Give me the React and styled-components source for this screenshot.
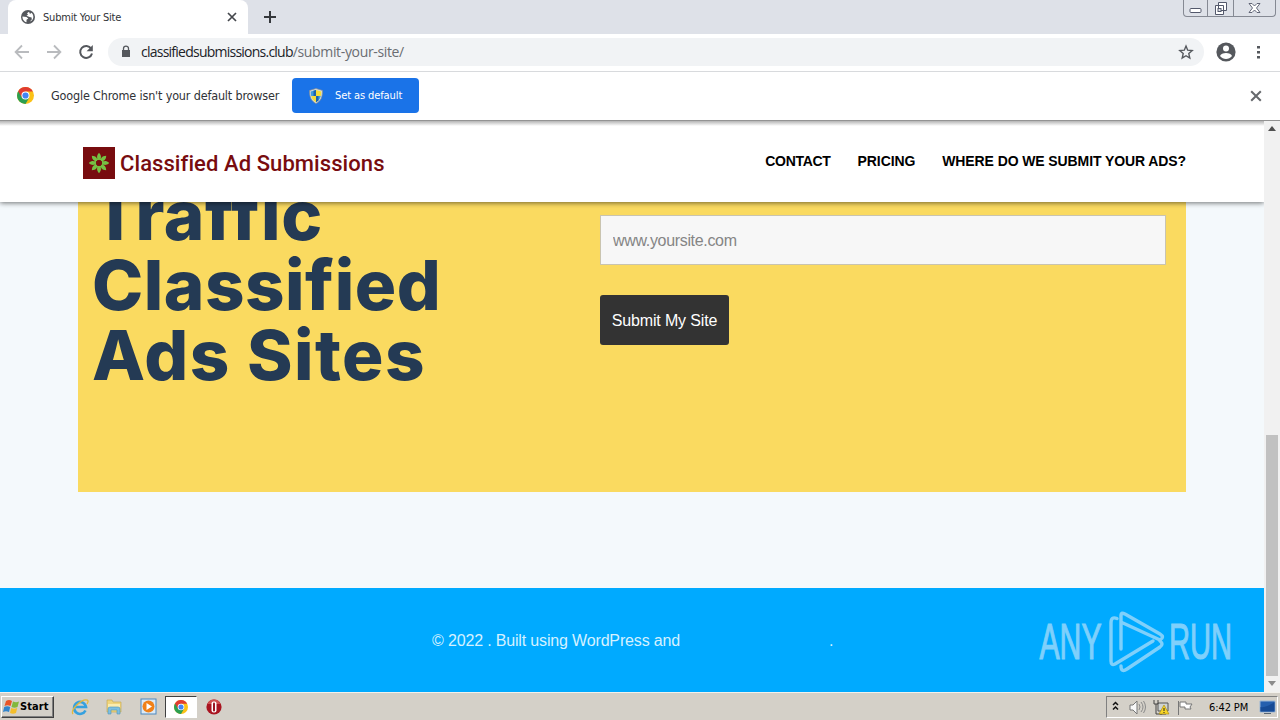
import styled, { createGlobalStyle } from "styled-components";

const GlobalStyle = createGlobalStyle`
  * {
    box-sizing: border-box;
  }
  body {
    margin: 0;
    overflow: hidden;
    font-family: "Liberation Sans", Arial, sans-serif;
  }
  svg {
    display: block;
    flex: none;
  }
`;

const Screen = styled.div`
  width: 1280px;
  height: 720px;
  display: flex;
  flex-direction: column;
  overflow: hidden;
`;

const Label = styled.span`
  font-family: ${(props) => props.$font || '"DejaVu Sans Condensed", "DejaVu Sans"'}, sans-serif;
  font-stretch: ${(props) => (props.$font ? "normal" : "condensed")};
  font-size: ${(props) => props.$size || 11}px;
  font-weight: ${(props) => props.$weight || 400};
  letter-spacing: ${(props) => props.$spacing || 0}px;
  color: ${(props) => props.$color || "#303236"};
  white-space: pre;
`;

/* browser */

const TabStrip = styled.div`
  height: 34px;
  flex: none;
  display: flex;
  justify-content: space-between;
  background: #dee1e8;
  padding-left: 8px;
`;

const TabGroup = styled.div`
  display: flex;
  align-items: center;
  gap: 14px;
`;

const Tab = styled.div`
  width: 240px;
  height: 34px;
  display: flex;
  align-items: center;
  padding: 0 10px 0 13px;
  gap: 8px;
  background: #ffffff;
  border-radius: 8px 8px 0 0;

  span {
    flex: 1;
  }
`;

const WindowButtons = styled.div`
  display: flex;
  width: 93px;
  height: 17px;
  margin-right: 4px;
  border: 1px solid #858993;
  border-top: 0;
  border-radius: 0 0 4px 4px;
`;

const WindowButton = styled.div`
  width: ${(props) => props.$width}px;
  display: flex;
  align-items: center;
  justify-content: center;
  border-right: ${(props) => (props.$last ? "0" : "1px solid #858993")};
`;

const Toolbar = styled.div`
  height: 38px;
  flex: none;
  display: flex;
  align-items: center;
  padding: 0 17px 1px 14px;
  background: #ffffff;
  border-bottom: 1px solid #d8dadd;
`;

const NavIcons = styled.div`
  display: flex;
  gap: 16px;
  margin-right: 14px;
`;

const AddressBar = styled.div`
  flex: 1;
  height: 28px;
  display: flex;
  align-items: center;
  padding: 0 10px 0 10px;
  border-radius: 14px;
  background: #f1f3f5;
`;

const Address = styled.div`
  flex: 1;
  display: flex;
  margin-left: 7px;
  padding-bottom: 2px;
`;

const ToolbarEnd = styled.div`
  display: flex;
  align-items: center;
  gap: 17px;
  margin-left: 12px;
`;

const InfoBar = styled.div`
  height: 49px;
  flex: none;
  display: flex;
  align-items: center;
  padding: 0 18px 1px 17px;
  background: #ffffff;
  border-bottom: 1px solid #939393;
`;

const InfoText = styled.div`
  width: 241px;
  margin-left: 17px;
  padding-bottom: 2px;
`;

const DefaultButton = styled.button`
  width: 127px;
  height: 35px;
  display: flex;
  align-items: center;
  gap: 12px;
  margin-right: auto;
  padding: 0 0 0 17px;
  border: 0;
  border-radius: 4px;
  background: #1a73e8;
`;

/* page */

const Viewport = styled.div`
  height: 571px;
  flex: none;
  display: flex;
`;

const Page = styled.div`
  width: 1264px;
  display: flex;
  flex-direction: column;
  overflow: hidden;
  background: #f4f9fc;
`;

const Header = styled.header`
  height: 81px;
  flex: none;
  display: flex;
  align-items: center;
  justify-content: space-between;
  padding: 0 78px 0 83px;
  background: linear-gradient(#b4b4b4, #ffffff 5px);
  box-shadow: 0 1px 5px rgba(0, 0, 0, 0.55);
  z-index: 1;
`;

const Brand = styled.div`
  display: flex;
  align-items: center;
  gap: 5px;
  padding-top: 3px;
`;

const Menu = styled.nav`
  display: flex;
  gap: 27px;
  padding-bottom: 2px;
  font-size: 14px;
  font-weight: 700;
  color: #000000;
  white-space: nowrap;
`;

const MenuItem = styled.span`
  letter-spacing: ${(props) => props.$spacing}px;
`;

const Hero = styled.section`
  width: 1108px;
  height: 290px;
  flex: none;
  display: flex;
  margin-left: 78px;
  overflow: hidden;
  background: #fada60;
`;

const Title = styled.h1`
  width: 522px;
  margin: -22px 0 0;
  padding-left: 14px;
  font-family: Inter, sans-serif;
  font-size: 69px;
  line-height: 70px;
  font-weight: 800;
  color: #243a54;
`;

const TitleLine = styled.div`
  letter-spacing: ${(props) => props.$spacing}px;
  white-space: nowrap;
`;

const Form = styled.form`
  display: flex;
  flex-direction: column;
  align-items: flex-start;
  gap: 30px;
  padding-top: 13px;
`;

const SiteInput = styled.input`
  width: 566px;
  height: 50px;
  padding: 2px 12px 0;
  border: 1px solid #c9c4b0;
  background: #f7f7f7;
  font-family: "Liberation Sans", Arial, sans-serif;
  font-size: 16px;
  letter-spacing: -0.33px;
  border-radius: 0;

  &::placeholder {
    color: #858585;
  }
`;

const SubmitButton = styled.button`
  width: 129px;
  height: 50px;
  padding: 2px 0 0;
  border: 0;
  border-radius: 3px;
  background: #333333;
  color: #ffffff;
  font-family: "Liberation Sans", Arial, sans-serif;
  font-size: 16px;
  letter-spacing: -0.16px;
`;

const Footer = styled.footer`
  height: 104px;
  display: flex;
  justify-content: space-between;
  margin-top: auto;
  padding: 22px 31px 0 432px;
  background: #00aaff;
`;

const Copyright = styled.p`
  margin: 22px 0 0;
  display: flex;
  gap: 149px;
  font-size: 16px;
  line-height: 18px;
  letter-spacing: -0.16px;
  color: #d5f1ff;
`;

const ScrollBar = styled.div`
  width: 16px;
  display: flex;
  flex-direction: column;
  align-items: center;
  justify-content: space-between;
  padding: 5px 0 6px;
  background: #f1f1f1;
`;

const Thumb = styled.div`
  width: 12px;
  height: 241px;
  margin: auto 0 5px;
  background: #c1c1c1;
`;

/* taskbar */

const TaskBar = styled.div`
  height: 28px;
  display: flex;
  align-items: center;
  padding: 2px 2px 2px 1px;
  background: #d4d0c8;
  border-top: 1px solid #f3f1ec;
`;

const StartButton = styled.div`
  width: 53px;
  height: 22px;
  display: flex;
  align-items: center;
  padding-left: 1px;
  border: 1px solid;
  border-color: #ffffff #404040 #404040 #ffffff;
  box-shadow: inset -1px -1px #808080;
`;

const QuickLaunch = styled.div`
  display: flex;
  align-items: center;
  margin-left: 9px;
`;

const TaskItem = styled.div`
  width: ${(props) => (props.$active ? 32 : 34)}px;
  height: 22px;
  display: flex;
  align-items: center;
  justify-content: center;
  background: ${(props) => (props.$active ? "#ffffff" : "transparent")};
  border: ${(props) => (props.$active ? "1px solid" : "0")};
  border-color: #404040 #ffffff #ffffff #404040;
`;

const Tray = styled.div`
  width: 172px;
  height: 22px;
  display: flex;
  align-items: center;
  margin-left: auto;
  padding: 0 1px 0 5px;
  border: 1px solid;
  border-color: #808080 #ffffff #ffffff #808080;
`;

const Clock = styled.div`
  width: 51px;
  margin-left: 15px;
  padding-bottom: 2px;
  line-height: 1;
`;

function Cross({ size, color }) {
  return (
    <svg width={size} height={size} viewBox="0 0 10 10">
      <path d="M1 1l8 8M9 1L1 9" stroke={color} strokeWidth="1.7" />
    </svg>
  );
}

function GlobeIcon() {
  return (
    <svg width="14" height="14" viewBox="0 0 14 14">
      <circle cx="7" cy="7" r="7" fill="#55585d" />
      <path d="M1.5 6.5l4 .5 1.8 1.6-1.8 1.2v2.4C3 11.6 1.2 9 1.5 6.5zM8 1.8L6 3.2l1 1.5-1.6 1 3.2 1.4 2 .3.2 2-2 2.2c4-.7 4.8-6.4 1.6-8.8L9 4z" fill="#fff" />
    </svg>
  );
}

function ArrowIcon({ flip }) {
  return (
    <svg width="16" height="16" viewBox="0 0 16 16" transform={flip ? "scale(-1 1)" : undefined}>
      <path d="M15 8H2M8 1.5L1.6 8 8 14.5" fill="none" stroke="#b9bbbe" strokeWidth="1.8" />
    </svg>
  );
}

function ReloadIcon() {
  return (
    <svg width="16" height="16" viewBox="0 0 16 16">
      <path d="M13.2 4.6A6 6 0 1 0 14 9.5" fill="none" stroke="#55585d" strokeWidth="2" />
      <path d="M14.8 1v6.2H8.6z" fill="#55585d" />
    </svg>
  );
}

function LockIcon() {
  return (
    <svg width="16" height="16" viewBox="0 0 16 16">
      <path d="M4 6h8v7H4z" fill="#55585d" />
      <path d="M5.5 6.5V4.6a2.5 2.5 0 0 1 5 0v1.9" fill="none" stroke="#55585d" strokeWidth="1.3" />
    </svg>
  );
}

function StarIcon() {
  return (
    <svg width="16" height="16" viewBox="0 0 16 16">
      <path d="M8 2l1.7 4.2 4.5.4-3.4 3 1 4.4L8 11.7 4.2 14l1-4.4-3.4-3 4.5-.4z" fill="none" stroke="#55585d" strokeWidth="1.4" />
    </svg>
  );
}

function ProfileIcon() {
  return (
    <svg width="20" height="20" viewBox="0 0 20 20">
      <circle cx="10" cy="10" r="9.6" fill="#55585d" />
      <circle cx="10" cy="6.6" r="3" fill="#fff" />
      <path d="M4 14c1-4 11-4 12 0-3 4-9 4-12 0z" fill="#fff" />
    </svg>
  );
}

function ChromeLogo({ size }) {
  return (
    <svg width={size} height={size} viewBox="0 0 16 16">
      <circle cx="8" cy="8" r="8" fill="#fbc116" />
      <path d="M8 8L1.1 4A8 8 0 0 0 8 16l3.5-6z" fill="#2b9f51" />
      <path d="M8 8L4.5 9.8 1.1 4A8 8 0 0 1 15 4.3H8z" fill="#e03c31" />
      <circle cx="8" cy="8" r="3.8" fill="#fff" />
      <circle cx="8" cy="8" r="2.9" fill="#4285f4" />
    </svg>
  );
}

function ShieldIcon() {
  return (
    <svg width="14" height="16" viewBox="0 0 14 16">
      <path d="M7 .5L13.5 2.5C13.5 9 12 13 7 15.5 2 13 .5 9 .5 2.5z" fill="#d5dde0" stroke="#868b8e" strokeWidth=".7" />
      <path d="M7 2v6H2.2C1.8 6 1.7 5 1.7 3.5zM7 8h4.8C11 11 9.8 12.7 7 14.2z" fill="#3f9be0" />
      <path d="M7 2v6H4.5V2.7zM7 8h2.5v4.5L7 14.2z" fill="#1c62ad" />
      <path d="M7 2l5.3 1.5c0 1.5-.1 2.5-.5 4.5H7zM7 8v6.2C4.2 12.7 3 11 2.2 8z" fill="#f4dc3b" />
    </svg>
  );
}

function FlowerLogo() {
  return (
    <svg width="32" height="32" viewBox="0 0 32 32">
      <rect width="32" height="32" fill="#780c0f" />
      <g transform="translate(16 16)" fill="#76c043">
        {[0, 45, 90, 135, 180, 225, 270, 315].map((angle) => (
          <path key={angle} d="M0-2.8C-2.2-4-3-7 0-10.2 3-7 2.2-4 0-2.8z" transform={`rotate(${angle})`} />
        ))}
        <circle r="4" fill="none" stroke="#76c043" strokeWidth="1.6" />
      </g>
    </svg>
  );
}

function Watermark() {
  return (
    <svg width="200" height="64" viewBox="0 0 200 64">
      <g
        fill="#7fd0fb"
        stroke="#7fd0fb"
        strokeWidth="1.2"
        fontFamily="'Liberation Sans Narrow', 'Liberation Sans', sans-serif"
        fontSize="50"
      >
        <text x="6.5" y="49" textLength="62" lengthAdjust="spacingAndGlyphs">ANY</text>
        <text x="136" y="49" textLength="63" lengthAdjust="spacingAndGlyphs">RUN</text>
      </g>
      <g fill="none" stroke="#7fd0fb" strokeWidth="3.4" strokeLinejoin="round" strokeLinecap="round">
        <path d="M84 8.5Q78 6 78 13v38q0 5 4 3l38-23" />
        <path d="M88 39V5q0-3 4-1l35 20q5 3 0 6l-37-17" />
        <path d="M88 56q0 7 6 3l33-22q4-3 0-6" />
      </g>
    </svg>
  );
}

function WindowsFlag() {
  return (
    <svg width="17" height="16" viewBox="0 0 17 16">
      <path d="M3 2q3-2 6 0L7.5 7Q4.5 5.5 1.5 7z" fill="#e95427" />
      <path d="M10 2.5q3 1.6 6 0L14.5 8q-3 1.5-6 0z" fill="#82b83c" />
      <path d="M1.2 8q3-1.5 6 0L6 13Q3 11.5 0 13z" fill="#3184cc" />
      <path d="M8.2 9q3 1.5 6 0L13 14q-3 1.5-6 0z" fill="#f4be2b" />
    </svg>
  );
}

function ExplorerIcon() {
  return (
    <svg width="18" height="18" viewBox="0 0 18 18">
      <path d="M14.5 12.5A6 6 0 1 1 15 9H4" fill="none" stroke="#36a1df" strokeWidth="2.6" />
      <path d="M2 16C-1 12 11 0 16.5 2.2 17.5 3 17 4.5 16 6" fill="none" stroke="#e4b83c" strokeWidth="1.3" />
    </svg>
  );
}

function FolderIcon() {
  return (
    <svg width="18" height="18" viewBox="0 0 18 18">
      <path d="M2 2h5l1 2h8v10H2z" fill="#f0d57d" stroke="#c5a44c" strokeWidth=".6" />
      <path d="M3 6h12v4H3z" fill="#faecb0" />
      <path d="M3 16v-5q0-2 2-2h8q2 0 2 2v5h-3v-4H6v4z" fill="#7dbfe2" stroke="#5393b6" strokeWidth=".6" />
    </svg>
  );
}

function PlayerIcon() {
  return (
    <svg width="17" height="17" viewBox="0 0 17 17">
      <rect x="1" y="1" width="15" height="15" fill="#dceaf6" stroke="#4d87bd" />
      <circle cx="8.5" cy="8.5" r="6" fill="#f08119" />
      <path d="M6.5 5l5.5 3.5L6.5 12z" fill="#fff" />
    </svg>
  );
}

function OperaIcon() {
  return (
    <svg width="16" height="16" viewBox="0 0 16 16">
      <circle cx="8" cy="8" r="7.6" fill="#a91420" />
      <path d="M1.5 5a7 7 0 0 1 13 0z" fill="#d05050" />
      <rect x="5.5" y="2.5" width="5" height="11" rx="2" fill="#fff" />
      <rect x="7" y="3.5" width="2" height="9" rx="1" fill="#9b1420" />
    </svg>
  );
}

function TrayIcons() {
  return (
    <svg width="82" height="18" viewBox="0 0 82 18">
      <path d="M1 7l2.5-2.5L6 7M1 11.5L3.5 9 6 11.5" fill="none" stroke="#111" strokeWidth="1.5" />
      <path d="M18 7h3l4-4v13l-4-4h-3z" fill="#f8f8f8" stroke="#777" />
      <path d="M27 6q2 3 0 6M29 4q4 5 0 10M31.5 3q4 6 0 12" fill="none" stroke="#8b8b8b" />
      <path d="M46 5h10v8H46z" fill="#cfd3d2" stroke="#555" />
      <path d="M42 2v4h4V2M44 6v10h6M48 16h6" fill="none" stroke="#444" />
      <path d="M52 7l5 9H47z" fill="#f7d527" stroke="#a58408" strokeWidth=".6" />
      <path d="M52 10v3M52 14v1" stroke="#222" />
      <path d="M66.5 3v14M68 4h6v2h6l-2 3 1 2h-6V9h-5z" fill="#fff" stroke="#777" />
    </svg>
  );
}

function App() {
  return (
    <>
      <GlobalStyle />
      <Screen>
        <TabStrip>
          <TabGroup>
            <Tab>
              <GlobeIcon />
              <Label $spacing={-0.2}>Submit Your Site</Label>
              <svg width="12" height="12" viewBox="0 0 12 12">
                <path d="M2 2l8 8M10 2l-8 8" stroke="#44474c" strokeWidth="1.7" />
              </svg>
            </Tab>
            <svg width="15" height="14" viewBox="0 0 15 14">
              <path d="M8 1v12M2 7h12" stroke="#35383c" strokeWidth="2" />
            </svg>
          </TabGroup>
          <WindowButtons>
            <WindowButton $width={25}>
              <svg width="13" height="16" viewBox="0 0 13 16">
                <rect x="1" y="8.5" width="11" height="4" rx="1" fill="#fff" stroke="#53586b" />
              </svg>
            </WindowButton>
            <WindowButton $width={26}>
              <svg width="14" height="16" viewBox="0 0 14 16">
                <path d="M4.5 2.5h8v8h-8zM1.5 5.5h8v9h-8z" fill="#fff" stroke="#53586b" />
                <rect x="4" y="8.5" width="3" height="3" fill="#dee1e8" stroke="#53586b" />
              </svg>
            </WindowButton>
            <WindowButton $width={42} $last>
              <svg width="13" height="16" viewBox="0 0 13 16">
                <path d="M1 3.5h3l2.5 2.5L9 3.5h3L8.5 8l3.5 4.5H9L6.5 10 4 12.5H1L4.5 8z" fill="#fff" stroke="#53586b" strokeWidth=".9" />
              </svg>
            </WindowButton>
          </WindowButtons>
        </TabStrip>

        <Toolbar>
          <NavIcons>
            <ArrowIcon />
            <ArrowIcon flip />
            <ReloadIcon />
          </NavIcons>
          <AddressBar>
            <LockIcon />
            <Address>
              <Label $font='"Open Sans"' $size={14} $spacing={-0.76} $color="#202227">classifiedsubmissions.club</Label>
              <Label $font='"Open Sans"' $size={14} $spacing={-0.35} $color="#6a6d72">/submit-your-site/</Label>
            </Address>
            <StarIcon />
          </AddressBar>
          <ToolbarEnd>
            <ProfileIcon />
            <svg width="10" height="16" viewBox="0 0 10 16">
              <path d="M4 2h3v2.5H4zM4 7h3v2.5H4zM4 12h3v2.5H4z" fill="#55585d" />
            </svg>
          </ToolbarEnd>
        </Toolbar>

        <InfoBar>
          <ChromeLogo size={17} />
          <InfoText>
            <Label $size={12.5} $spacing={-0.17}>Google Chrome isn't your default browser</Label>
          </InfoText>
          <DefaultButton>
            <ShieldIcon />
            <Label $spacing={-0.1} $color="#ffffff">Set as default</Label>
          </DefaultButton>
          <Cross size={12} color="#66696d" />
        </InfoBar>

        <Viewport>
          <Page>
            <Header>
              <Brand>
                <FlowerLogo />
                <Label $font="Roboto" $size={22} $weight={500} $spacing={0.08} $color="#780c0f">Classified Ad Submissions</Label>
              </Brand>
              <Menu>
                <MenuItem $spacing={-0.3}>CONTACT</MenuItem>
                <MenuItem $spacing={-0.1}>PRICING</MenuItem>
                <MenuItem $spacing={-0.1}>WHERE DO WE SUBMIT YOUR ADS?</MenuItem>
              </Menu>
            </Header>
            <Hero>
              <Title>
                <TitleLine $spacing={0.7}>Traffic</TitleLine>
                <TitleLine $spacing={0.5}>Classified</TitleLine>
                <TitleLine $spacing={1.4}>Ads Sites</TitleLine>
              </Title>
              <Form>
                <SiteInput placeholder="www.yoursite.com" />
                <SubmitButton type="button">Submit My Site</SubmitButton>
              </Form>
            </Hero>
            <Footer>
              <Copyright>
                <span>© 2022 . Built using WordPress and</span>
                <span>.</span>
              </Copyright>
              <Watermark />
            </Footer>
          </Page>
          <ScrollBar>
            <svg width="8" height="5" viewBox="0 0 8 5">
              <path d="M0 5l4-5 4 5z" fill="#505050" />
            </svg>
            <Thumb />
            <svg width="8" height="5" viewBox="0 0 8 5">
              <path d="M0 0h8L4 5z" fill="#8b8b8b" />
            </svg>
          </ScrollBar>
        </Viewport>

        <TaskBar>
          <StartButton>
            <WindowsFlag />
            <Label $weight={700} $spacing={0.1} $color="#000000">Start</Label>
          </StartButton>
          <QuickLaunch>
            <TaskItem>
              <ExplorerIcon />
            </TaskItem>
            <TaskItem>
              <FolderIcon />
            </TaskItem>
            <TaskItem>
              <PlayerIcon />
            </TaskItem>
            <TaskItem $active>
              <ChromeLogo size={14} />
            </TaskItem>
            <TaskItem>
              <OperaIcon />
            </TaskItem>
          </QuickLaunch>
          <Tray>
            <TrayIcons />
            <Clock>
              <Label $color="#000000" $spacing={-0.1}>6:42 PM</Label>
            </Clock>
            <svg width="17" height="16" viewBox="0 0 17 16">
              <path d="M1 2h15v11H1z" fill="#255fae" stroke="#9bb6d5" />
              <path d="M1.5 8C6 9 11 6 15.5 3v9.5h-14z" fill="#174b96" />
              <path d="M5 14.5h7" stroke="#5a6672" />
            </svg>
          </Tray>
        </TaskBar>
      </Screen>
    </>
  );
}

export default App;
